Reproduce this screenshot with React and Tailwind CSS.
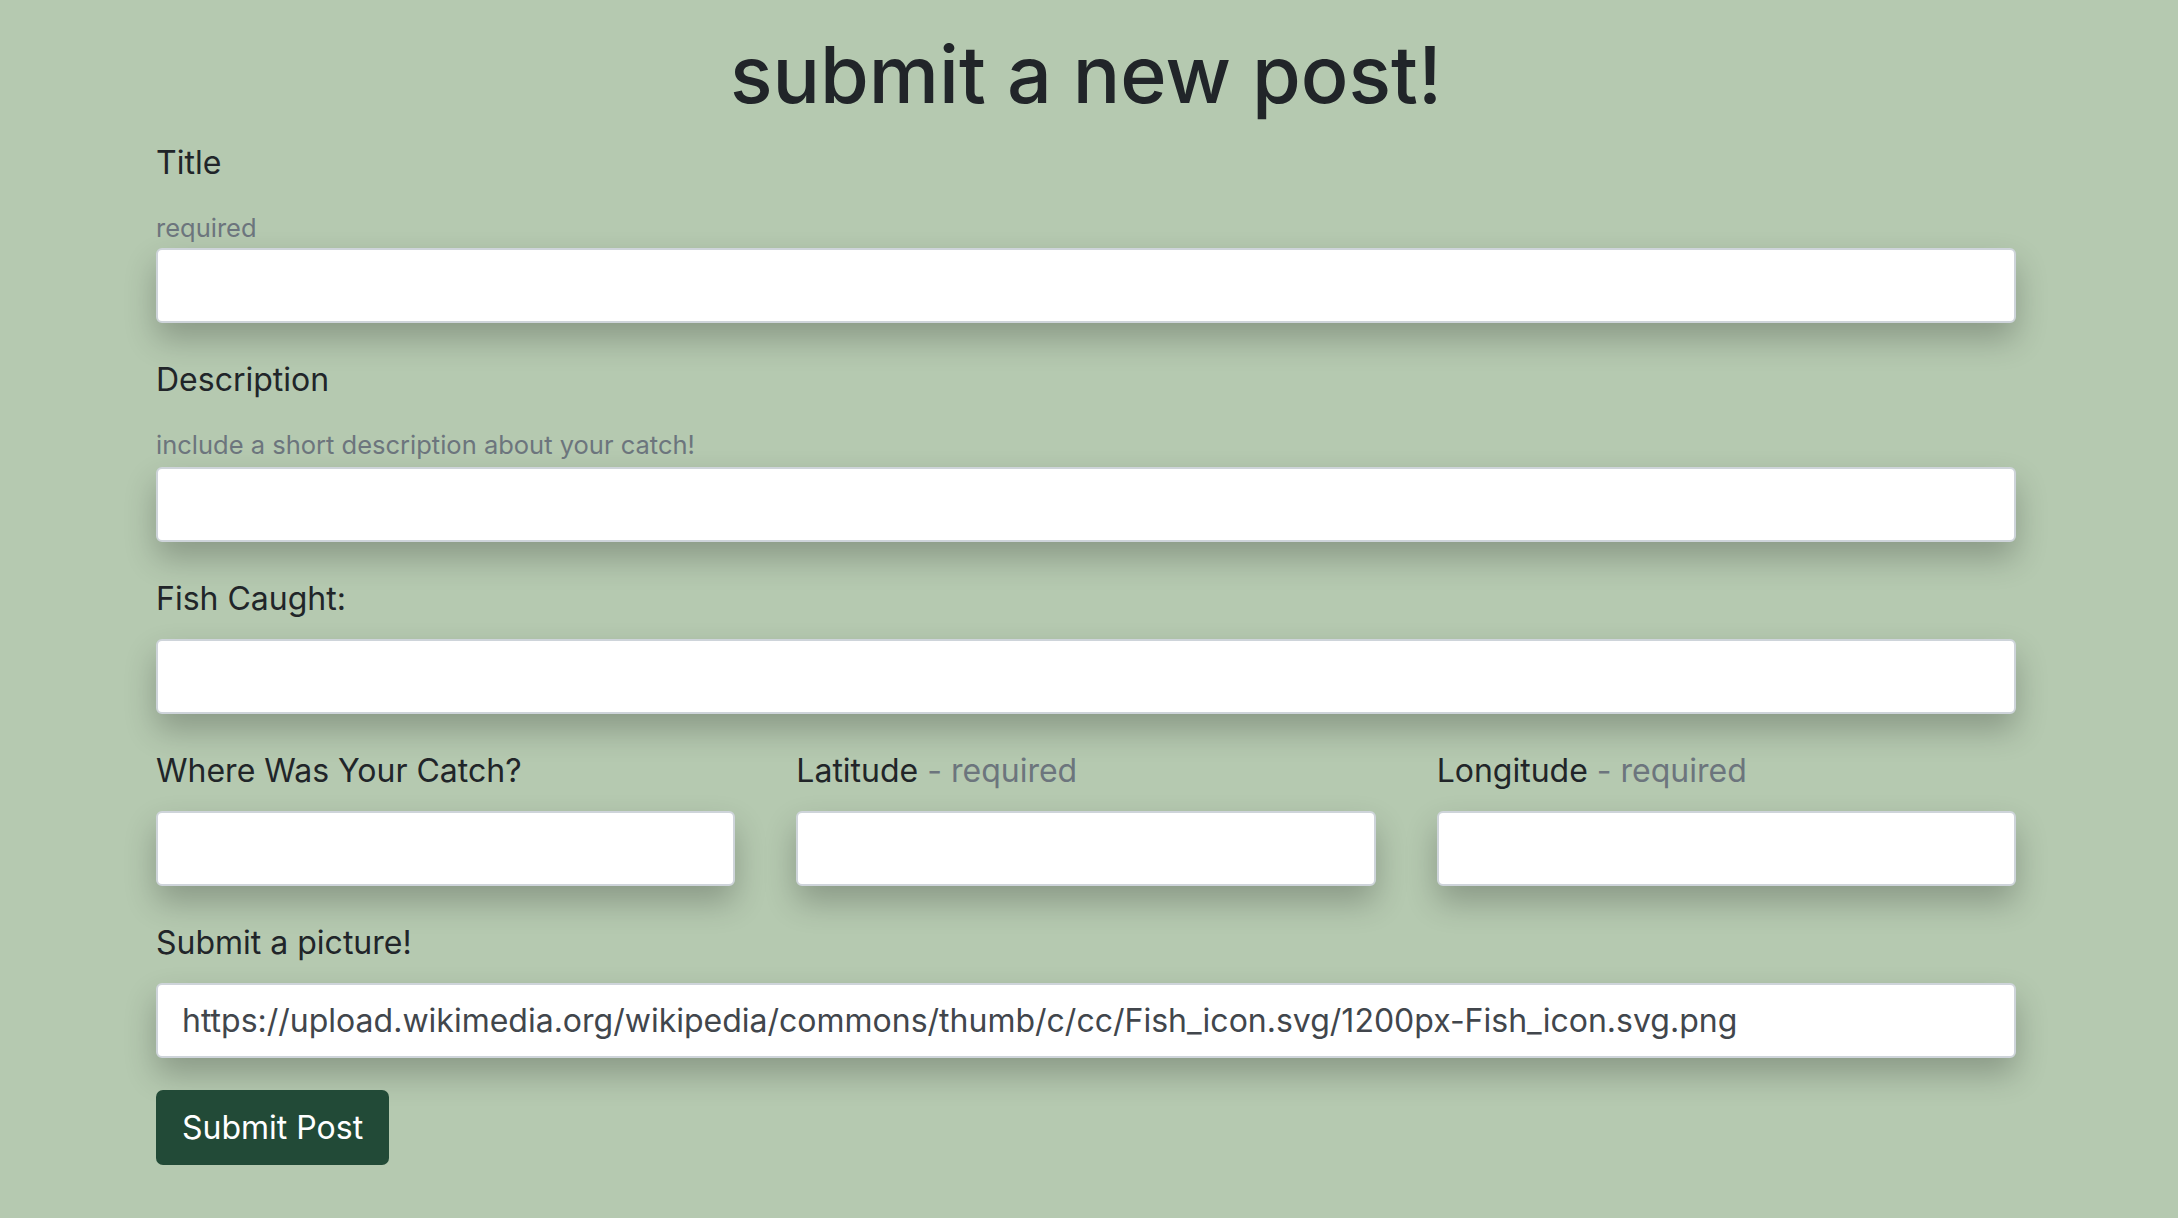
// App.jsx — "submit a new post!" form
const inputCls =
  'block w-full h-[75px] rounded-[6px] border-2 border-[#ced4da] bg-white px-[24px] text-[32px] text-[#41464c] shadow-[0_16px_32px_rgba(0,0,0,0.24)] outline-none'

function Label({ children, muted }) {
  return (
    <label className="block text-[32px] leading-[46px] text-[#212529]">
      {children}
      {muted && <span className="text-[#6c757d]"> - {muted}</span>}
    </label>
  )
}

function Hint({ children }) {
  return <p className="mt-[22px] text-[25.5px] leading-[40px] text-[#6c757d]">{children}</p>
}

export default function App() {
  return (
    <div
      className="min-h-screen bg-[#b5c9b0]"
      style={{ fontFamily: 'Inter, "Noto Sans", sans-serif' }}
    >
      <div className="ml-[156px] w-[1860px] pt-[26px] pb-[40px]">
        <h1 className="text-center text-[79px] leading-[96px] font-medium text-[#212529]">
          submit a new post!
        </h1>

        {/* Title */}
        <div className="mt-[18px]">
          <Label>Title</Label>
          <Hint>required</Hint>
          <input className={inputCls} type="text" />
        </div>

        {/* Description */}
        <div className="mt-[34px]">
          <Label>Description</Label>
          <Hint>include a short description about your catch!</Hint>
          <input className={`${inputCls} mt-[2px]`} type="text" />
        </div>

        {/* Fish */}
        <div className="mt-[34px]">
          <Label>Fish Caught:</Label>
          <input className={`${inputCls} mt-[17px]`} type="text" />
        </div>

        {/* Location row */}
        <div className="mt-[34px] grid grid-cols-3 gap-x-[61px]">
          <div>
            <Label>Where Was Your Catch?</Label>
            <input className={`${inputCls} mt-[17px]`} type="text" />
          </div>
          <div>
            <Label muted="required">Latitude</Label>
            <input className={`${inputCls} mt-[17px]`} type="text" />
          </div>
          <div>
            <Label muted="required">Longitude</Label>
            <input className={`${inputCls} mt-[17px]`} type="text" />
          </div>
        </div>

        {/* Picture */}
        <div className="mt-[34px]">
          <Label>Submit a picture!</Label>
          <input
            className={`${inputCls} mt-[17px]`}
            type="text"
            defaultValue="https://upload.wikimedia.org/wikipedia/commons/thumb/c/cc/Fish_icon.svg/1200px-Fish_icon.svg.png"
          />
        </div>

        <button className="mt-[32px] h-[75px] rounded-[7px] bg-[#224a37] px-[26px] text-[32px] text-white">
          Submit Post
        </button>
      </div>
    </div>
  )
}
